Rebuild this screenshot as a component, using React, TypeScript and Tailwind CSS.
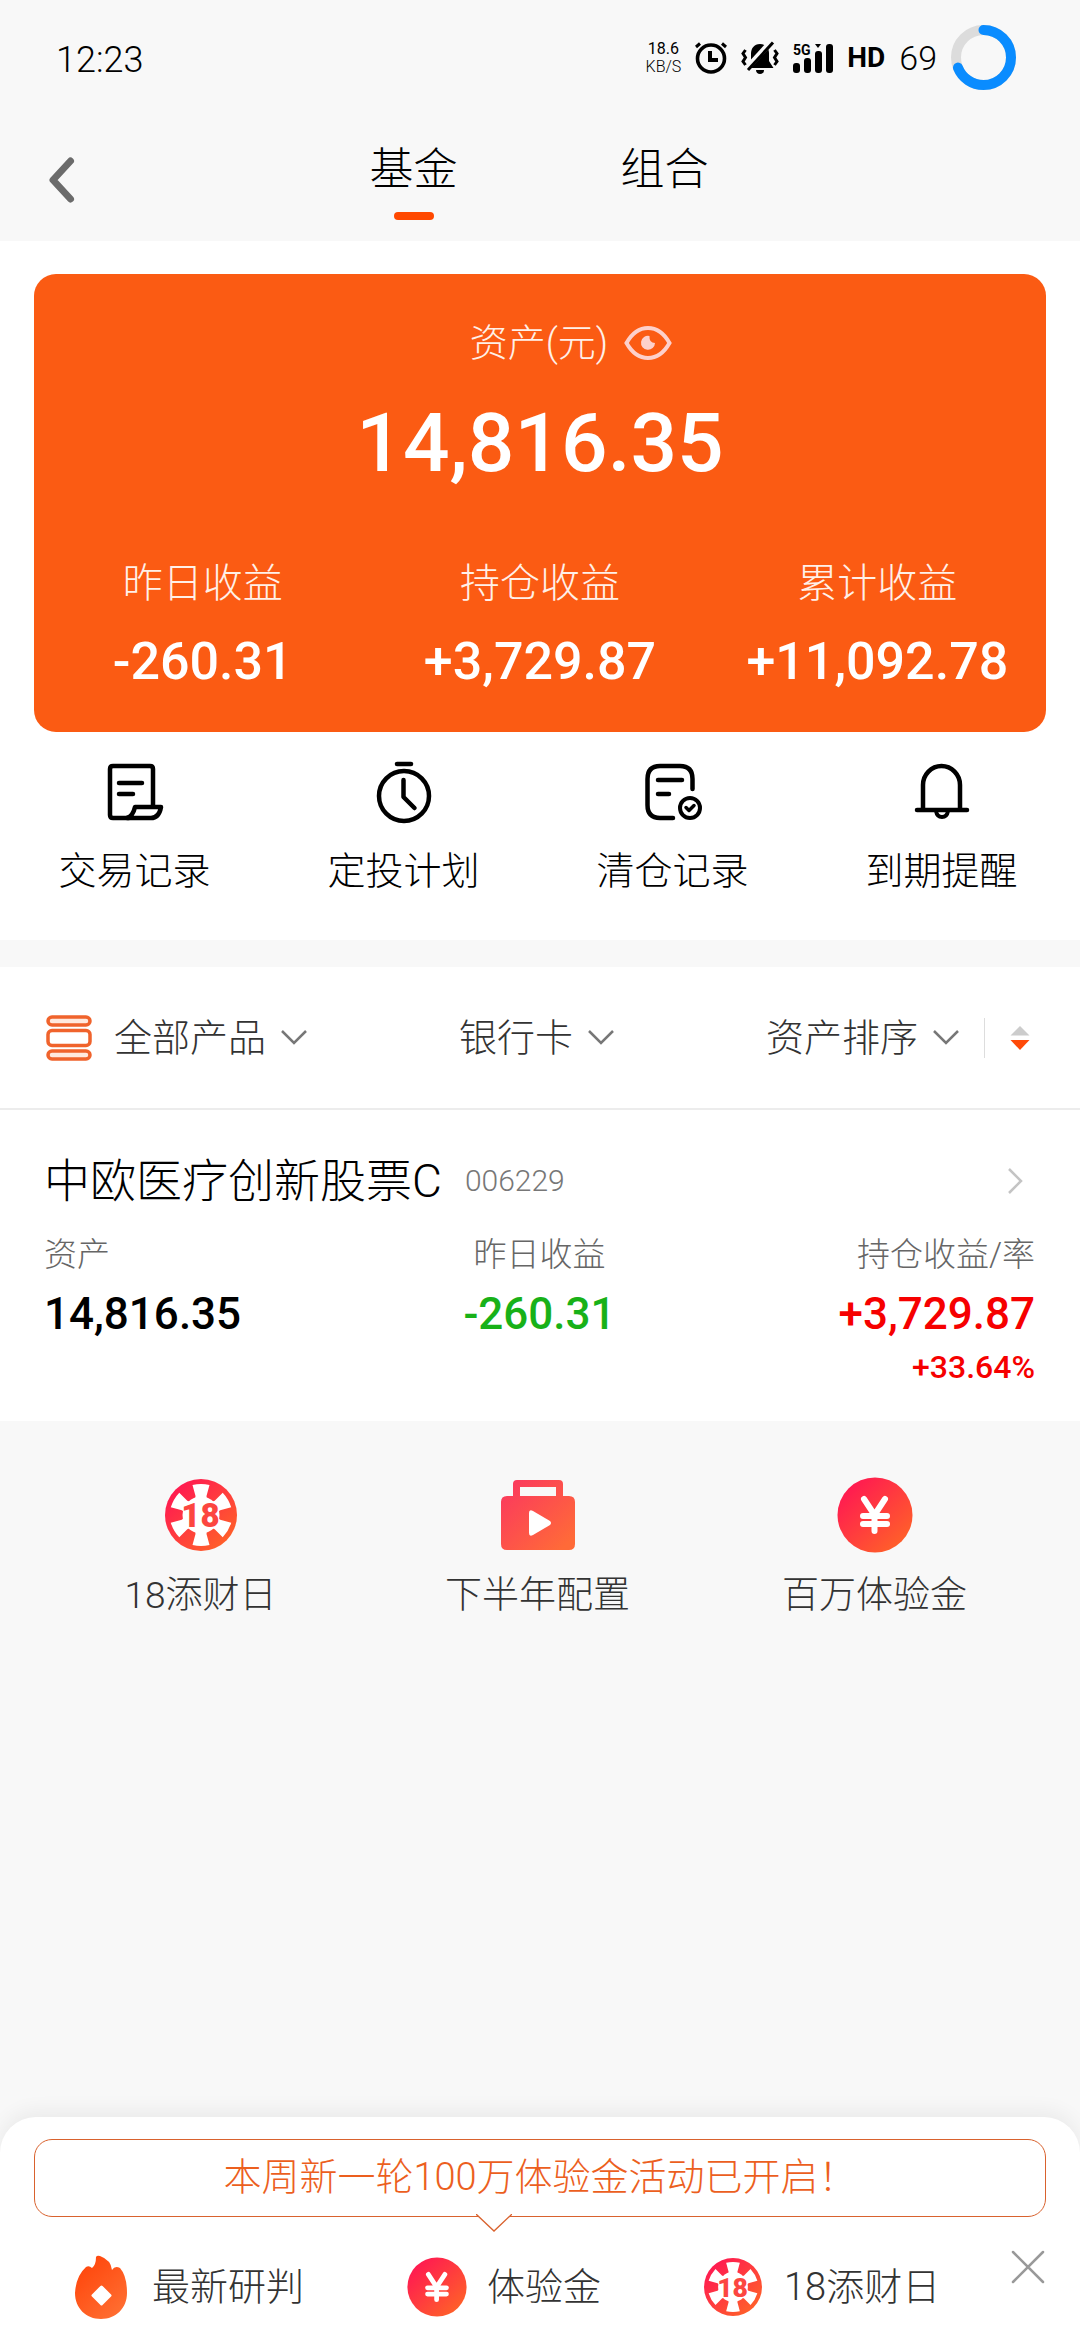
import React, { useId } from "react";

type IconProps = { className?: string };

/* ---------- Status bar icons ---------- */

function AlarmIcon() {
  return (
    <svg className="w-8 h-8" viewBox="0 0 32 32" fill="none" stroke="#000">
      <circle cx="16" cy="16.500" r="13.500" strokeWidth="3.600" />
      <path d="M15 9v9h8" strokeWidth="4" />
      <path d="M1 5 L5 1.500 M31 5 L27 1.500" strokeWidth="3" />
    </svg>
  );
}

function MuteIcon() {
  return (
    <svg className="w-[38px] h-[34px]" viewBox="0 0 38 34">
      <path
        d="M19 3c-6 0-9 4.500-9 9.500v8L5.500 27h27L28 20v-8C28 7 25 3 19 3z"
        fill="#000"
      />
      <path d="M15 29h8c0 2.500-1.800 4-4 4s-4-1.500-4-4z" fill="#000" />
      <path d="M4.500 29 L29.500 1.500" stroke="#f8f8f8" strokeWidth="6" />
      <path d="M7 29 L32 1.500" stroke="#000" strokeWidth="3" />
      <path
        d="M4.500 9L2 12.500l2.500 4-2.500 4L4.500 24M33.500 9l2.500 3.500-2.500 4 2.500 4-2.500 3.500"
        fill="none"
        stroke="#000"
        strokeWidth="3"
      />
    </svg>
  );
}

function SignalIcon() {
  return (
    <svg className="w-10 h-8" viewBox="0 0 40 32">
      <text
        x="0"
        y="13"
        fontFamily="Roboto, sans-serif"
        fontWeight="700"
        fontSize="14"
      >
        5G
      </text>
      <path d="M22 2h6l-3 4z" />
      <rect x="0" y="21" width="7" height="10" rx="3" />
      <rect x="11" y="16" width="7" height="15" rx="3" />
      <rect x="22" y="9" width="7" height="22" rx="3" />
      <rect x="33" y="2" width="7" height="29" rx="3" />
    </svg>
  );
}

function BatteryRing() {
  return (
    <svg className="w-[65px] h-[65px]" viewBox="0 0 65 65" fill="none">
      <circle cx="32.500" cy="32.500" r="27.500" stroke="#dcdcdc" strokeWidth="10" />
      <circle
        cx="32.500"
        cy="32.500"
        r="27.500"
        stroke="#0a8cff"
        strokeWidth="10"
        strokeLinecap="round"
        pathLength="100"
        strokeDasharray="69 100"
        transform="rotate(-90 32.500 32.500)"
      />
    </svg>
  );
}

/* ---------- Action icons ---------- */

function RecordIcon() {
  return (
    <svg
      className="w-[60px] h-[64px]"
      viewBox="0 0 60 64"
      fill="none"
      stroke="#000"
      strokeWidth="4.500"
      strokeLinecap="round"
      strokeLinejoin="round"
    >
      <path d="M48 46V9q0-3-3-3H8Q5 6 5 9v46q0 3 3 3h16" />
      <path d="M14 23h23M14 34h14" />
      <path d="M22 58q6-2 8-11h26q-2 11-10 11H22z" />
    </svg>
  );
}

function TimerIcon() {
  return (
    <svg
      className="w-[60px] h-[64px]"
      viewBox="0 0 60 64"
      fill="none"
      stroke="#000"
      strokeWidth="4.500"
      strokeLinecap="round"
    >
      <circle cx="30" cy="36" r="25" />
      <path d="M23 4h14" />
      <path d="M29.500 20v17l11 11" strokeLinejoin="round" />
    </svg>
  );
}

function ClearedIcon() {
  return (
    <svg
      className="w-[60px] h-[64px]"
      viewBox="0 0 60 64"
      fill="none"
      stroke="#000"
      strokeWidth="4.500"
      strokeLinecap="round"
      strokeLinejoin="round"
    >
      <path d="M49.500 29V19Q49.500 6 37 6H17Q4.500 6 4.500 19v26Q4.500 58 17 58h13" />
      <path d="M15 20h24M15 34h11" />
      <circle cx="47" cy="48" r="10" strokeWidth="4" />
      <path d="M43 47.500l3 3 5-5" strokeWidth="3.500" />
    </svg>
  );
}

function BellIcon() {
  return (
    <svg
      className="w-[60px] h-[64px]"
      viewBox="0 0 60 64"
      fill="none"
      stroke="#000"
      strokeWidth="4.500"
      strokeLinecap="round"
    >
      <path d="M11 49V25a18.500 19 0 0 1 37 0v24" />
      <path d="M5 50h50" />
      <path d="M24 51q1 6 6 6t6-6" strokeWidth="4" />
    </svg>
  );
}

/* ---------- Shared small icons ---------- */

function EyeIcon() {
  return (
    <svg
      className="w-12 h-[34px]"
      viewBox="0 0 48 34"
      fill="none"
      stroke="#fdd0cb"
      strokeWidth="4"
    >
      <path d="M2.500 17Q11 2 24 2t21.500 15Q37 32 24 32T2.500 17z" />
      <path
        d="M25.500 10a7 7 0 1 0 5.500 7q-6 0-5.500-7z"
        fill="#fdd0cb"
        stroke="none"
      />
    </svg>
  );
}

function ChevronDown() {
  return (
    <svg
      className="w-[26px] h-[15px]"
      viewBox="0 0 26 15"
      fill="none"
      stroke="#777"
      strokeWidth="2.500"
    >
      <path d="M1 1l12 12L25 1" />
    </svg>
  );
}

function StackIcon() {
  return (
    <svg
      className="w-[46px] h-[46px]"
      viewBox="0 0 46 46"
      fill="#ffe9de"
      stroke="#f0632c"
      strokeWidth="3.500"
    >
      <rect x="2" y="2" width="42" height="8" rx="4" />
      <rect x="2" y="15.500" width="42" height="15" rx="4" fill="#fff" />
      <rect x="2" y="36" width="42" height="8" rx="4" />
    </svg>
  );
}

function RedGradient({ id }: { id: string }) {
  return (
    <defs>
      <linearGradient id={id} x1="0.100" y1="0.200" x2="0.800" y2="0.950">
        <stop offset="0" stopColor="#ff1c50" />
        <stop offset="1" stopColor="#ff6029" />
      </linearGradient>
    </defs>
  );
}

function ChipIcon({ className }: IconProps) {
  const id = useId();
  return (
    <svg className={className} viewBox="0 0 72 72">
      <RedGradient id={id} />
      <circle cx="36" cy="36" r="36" fill={`url(#${id})`} />
      {[0, 60, 120, 180, 240, 300].map((angle) => (
        <path
          key={angle}
          d="M27.500 6Q36 4 44.500 6L41.500 17q0 5 4 6H26.500q4-1 4-6z"
          fill="#fff"
          transform={`rotate(${angle} 36 36)`}
        />
      ))}
      <circle cx="36" cy="36" r="18.500" fill="#fff" />
      <text
        x="35.500"
        y="48"
        textAnchor="middle"
        fontFamily="Roboto, sans-serif"
        fontWeight="900"
        fontSize="33"
        fill="#fc4640"
      >
        18
      </text>
    </svg>
  );
}

function CaseIcon({ className }: IconProps) {
  const id = useId();
  return (
    <svg className={className} viewBox="0 0 76 72">
      <defs>
        <linearGradient id={id} x1="0" y1="0" x2="1" y2="1">
          <stop offset="0.100" stopColor="#fb3b5c" />
          <stop offset="0.900" stopColor="#ff6a38" />
        </linearGradient>
      </defs>
      <path
        d="M17 1h42q4 0 4 4v12h6q6 0 6 6v42q0 6-6 6H7q-6 0-6-6V23q0-6 6-6h6V5q0-4 4-4zM20 8v9h36V8z"
        fill={`url(#${id})`}
        fillRule="evenodd"
      />
      <path
        d="M29 34v20q0 4 4 2l17-10q2-2 0-4L33 32q-4-2-4 2z"
        fill="#fff"
      />
    </svg>
  );
}

function YuanIcon({ className }: IconProps) {
  const id = useId();
  return (
    <svg className={className} viewBox="0 0 76 76">
      <RedGradient id={id} />
      <circle cx="38" cy="38" r="37.500" fill={`url(#${id})`} />
      <path
        d="M27 22l10.500 16L48 22M37.500 38v16M26 39h24M26 47h24"
        fill="none"
        stroke="#fff"
        strokeWidth="6"
        strokeLinecap="round"
      />
    </svg>
  );
}

function FlameIcon({ className }: IconProps) {
  const id = useId();
  return (
    <svg className={className} viewBox="0 0 54 64">
      <defs>
        <linearGradient id={id} x1="0.200" y1="0.200" x2="0.800" y2="1">
          <stop offset="0" stopColor="#ff4a10" />
          <stop offset="1" stopColor="#ff6f32" />
        </linearGradient>
      </defs>
      <path
        d="M22 2q1-2 4-1 11 4 12 14 3-5 8-2 7 8 7 25c0 15-11 26-26 26S1 53 1 38Q2 21 12 12q3-2 6 1 4-3 4-11z"
        fill={`url(#${id})`}
      />
      <rect
        x="20"
        y="33"
        width="15"
        height="15"
        rx="1.500"
        fill="#fff"
        transform="rotate(45 27.500 40.500)"
      />
    </svg>
  );
}

/* ---------- Data ---------- */

const earnings = [
  { label: "昨日收益", value: "-260.31" },
  { label: "持仓收益", value: "+3,729.87" },
  { label: "累计收益", value: "+11,092.78" },
];

const actions = [
  { label: "交易记录", icon: <RecordIcon /> },
  { label: "定投计划", icon: <TimerIcon /> },
  { label: "清仓记录", icon: <ClearedIcon /> },
  { label: "到期提醒", icon: <BellIcon /> },
];

const shortcuts = [
  { label: "18添财日", icon: <ChipIcon className="w-[72px] h-[72px]" /> },
  { label: "下半年配置", icon: <CaseIcon className="w-[76px] h-[72px]" /> },
  { label: "百万体验金", icon: <YuanIcon className="w-[76px] h-[76px]" /> },
];

/* ---------- Sections ---------- */

function StatusBar() {
  return (
    <div className="flex items-center justify-between pt-[25px] pl-14 pr-16">
      <span className="pt-1 text-[36px] leading-[40px]">12:23</span>
      <div className="flex items-center">
        <div className="text-center text-[16px] leading-[18px]">
          <div className="font-normal">18.6</div>
          <div>KB/S</div>
        </div>
        <div className="flex items-center gap-[14px] ml-[14px]">
          <AlarmIcon />
          <MuteIcon />
          <SignalIcon />
          <span className="text-[28px] leading-[32px] font-bold">HD</span>
          <span className="text-[34px] leading-[40px]">69</span>
          <BatteryRing />
        </div>
      </div>
    </div>
  );
}

function NavBar() {
  return (
    <nav className="flex items-start h-[151px]">
      <button aria-label="返回" className="w-24 pt-[66px] pl-12">
        <svg
          className="w-7 h-12"
          viewBox="0 0 28 48"
          fill="none"
          stroke="#6b6b6b"
          strokeWidth="7"
          strokeLinecap="round"
          strokeLinejoin="round"
        >
          <path d="M22.500 5L5 24l17.500 19" />
        </svg>
      </button>
      <div className="flex flex-1 justify-center gap-[163px] pt-[57px] text-[44px] leading-[46px]">
        <button className="flex flex-col items-center gap-[19px]">
          基金
          <span className="w-10 h-2 rounded-full bg-[#ff4800]" />
        </button>
        <button className="flex flex-col items-center">组合</button>
      </div>
      <div className="w-[98px]" />
    </nav>
  );
}

function AssetCard() {
  return (
    <section className="mx-[34px] pt-[47px] pb-[30px] rounded-[22px] bg-[#fb5b13] text-white text-center">
      <div className="flex items-center justify-center gap-[16px] pl-[62px]">
        <span className="text-[38px] leading-[44px] text-[#fff0e8]">
          资产(元)
        </span>
        <button aria-label="隐藏金额">
          <EyeIcon />
        </button>
      </div>
      <div className="mt-[28px] text-[82px] leading-[100px] font-medium">
        14,816.35
      </div>
      <div className="grid grid-cols-3 mt-[65px]">
        {earnings.map((item) => (
          <div key={item.label}>
            <div className="text-[40px] leading-[52px] text-[#fff0e8]">
              {item.label}
            </div>
            <div className="mt-[12px] text-[52px] leading-[80px] font-medium whitespace-nowrap">
              {item.value}
            </div>
          </div>
        ))}
      </div>
    </section>
  );
}

function Actions() {
  return (
    <section className="grid grid-cols-4 pt-[28px] pb-[47px] pr-1">
      {actions.map((item) => (
        <button
          key={item.label}
          className="flex flex-col items-center gap-[25px]"
        >
          {item.icon}
          <span className="text-[38px] leading-[44px]">{item.label}</span>
        </button>
      ))}
    </section>
  );
}

function Filter({ label, name }: { label: string; name: string }) {
  return (
    <label className="flex items-center gap-[14px]">
      <select
        aria-label={name}
        className="appearance-none bg-transparent h-[52px] p-0 text-[38px] leading-[52px] text-[#333]"
      >
        <option>{label}</option>
      </select>
      <ChevronDown />
    </label>
  );
}

function FilterBar() {
  return (
    <section className="flex items-center justify-between h-[143px] pl-[46px] pr-[50px] bg-white border-b-2 border-[#ececec]">
      <div className="flex items-center gap-[22px]">
        <StackIcon />
        <Filter name="产品" label="全部产品" />
      </div>
      <Filter name="支付方式" label="银行卡" />
      <div className="flex items-center">
        <Filter name="排序" label="资产排序" />
        <div className="w-px h-10 ml-[25px] mr-[25px] bg-[#ddd]" />
        <button aria-label="切换升降序">
          <svg className="w-5 h-6" viewBox="0 0 20 24">
            <path d="M10 0l9.500 9.500H.5z" fill="#ccc" />
            <path d="M10 24l9.500-10H.5z" fill="#ff4a08" />
          </svg>
        </button>
      </div>
    </section>
  );
}

function FundItem() {
  return (
    <a href="#fund" className="block bg-white pt-[41px] pb-[34px] pl-[44px] pr-[45px]">
      <div className="flex items-center">
        <h2 className="text-[46px] leading-[60px]">中欧医疗创新股票C</h2>
        <span className="ml-[23px] text-[30px] leading-[60px] text-[#777]">
          006229
        </span>
        <svg
          className="w-4 h-[26px] ml-auto mr-[12px]"
          viewBox="0 0 16 26"
          fill="none"
          stroke="#c4c4c4"
          strokeWidth="2.500"
        >
          <path d="M2 1l12 12L2 25" />
        </svg>
      </div>
      <dl className="grid grid-cols-3 mt-[20px]">
        <div>
          <dt className="text-[33px] leading-[48px] text-[#666]">资产</dt>
          <dd className="mt-[5px] text-[44px] leading-[60px] font-medium">
            14,816.35
          </dd>
        </div>
        <div className="text-center">
          <dt className="text-[33px] leading-[48px] text-[#666]">昨日收益</dt>
          <dd className="mt-[5px] text-[44px] leading-[60px] font-medium text-[#18b118]">
            -260.31
          </dd>
        </div>
        <div className="text-right">
          <dt className="text-[33px] leading-[48px] text-[#666]">
            持仓收益/率
          </dt>
          <dd className="mt-[5px] text-[44px] leading-[60px] font-medium text-[#f60000]">
            +3,729.87
          </dd>
          <dd className="mt-[3px] text-[32px] leading-[40px] font-medium text-[#f60000]">
            +33.64%
          </dd>
        </div>
      </dl>
    </a>
  );
}

function Shortcuts() {
  return (
    <section className="grid grid-cols-3 pl-[32px] pr-[37px] pt-[56px] pb-16">
      {shortcuts.map((item) => (
        <button key={item.label} className="flex flex-col items-center">
          <span className="flex items-center h-[76px]">{item.icon}</span>
          <span className="mt-[21px] text-[37px] leading-[44px] text-[#333]">
            {item.label}
          </span>
        </button>
      ))}
    </section>
  );
}

function PromoSheet() {
  return (
    <footer className="mt-auto h-[223px] pt-[22px] px-[34px] rounded-t-[36px] bg-white shadow-[0_-6px_20px_rgba(0,0,0,0.06)]">
      <div className="relative h-[78px] rounded-[18px] border border-[#d9622e] text-center text-[38px] leading-[74px] text-[#ec5f1e]">
        本周新一轮100万体验金活动已开启！
        <svg
          className="absolute left-[441px] top-[74px] w-9 h-[18px]"
          viewBox="0 0 36 18"
          fill="#fff"
          stroke="#d9622e"
          strokeWidth="1.300"
        >
          <path d="M0 0l18 17L36 0" />
        </svg>
      </div>
      <div className="flex items-start pl-[40px] text-[38px] leading-[44px] text-[#333]">
        <div className="flex items-center gap-[103px] pt-[38px]">
          <button className="flex items-center gap-[24px]">
            <FlameIcon className="w-[54px] h-[64px]" />
            最新研判
          </button>
          <button className="flex items-center gap-[20px]">
            <YuanIcon className="w-[60px] h-[60px]" />
            体验金
          </button>
          <button className="flex items-center gap-[22px]">
            <ChipIcon className="w-[58px] h-[60px]" />
            18添财日
          </button>
        </div>
        <button aria-label="关闭" className="ml-auto pt-[32px]">
          <svg
            className="w-9 h-9"
            viewBox="0 0 36 36"
            fill="none"
            stroke="#999"
            strokeWidth="2.500"
            strokeLinecap="round"
          >
            <path d="M3 3l30 30M33 3L3 33" />
          </svg>
        </button>
      </div>
    </footer>
  );
}

export default function App() {
  return (
    <div className="flex flex-col min-h-screen bg-[#f8f8f8] font-[Roboto,'Noto_Sans_CJK_SC',sans-serif] font-light text-black">
      <header>
        <StatusBar />
        <NavBar />
      </header>
      <div className="pt-[33px] bg-white">
        <AssetCard />
        <Actions />
      </div>
      <div className="mt-[27px]">
        <FilterBar />
        <FundItem />
      </div>
      <Shortcuts />
      <PromoSheet />
    </div>
  );
}
